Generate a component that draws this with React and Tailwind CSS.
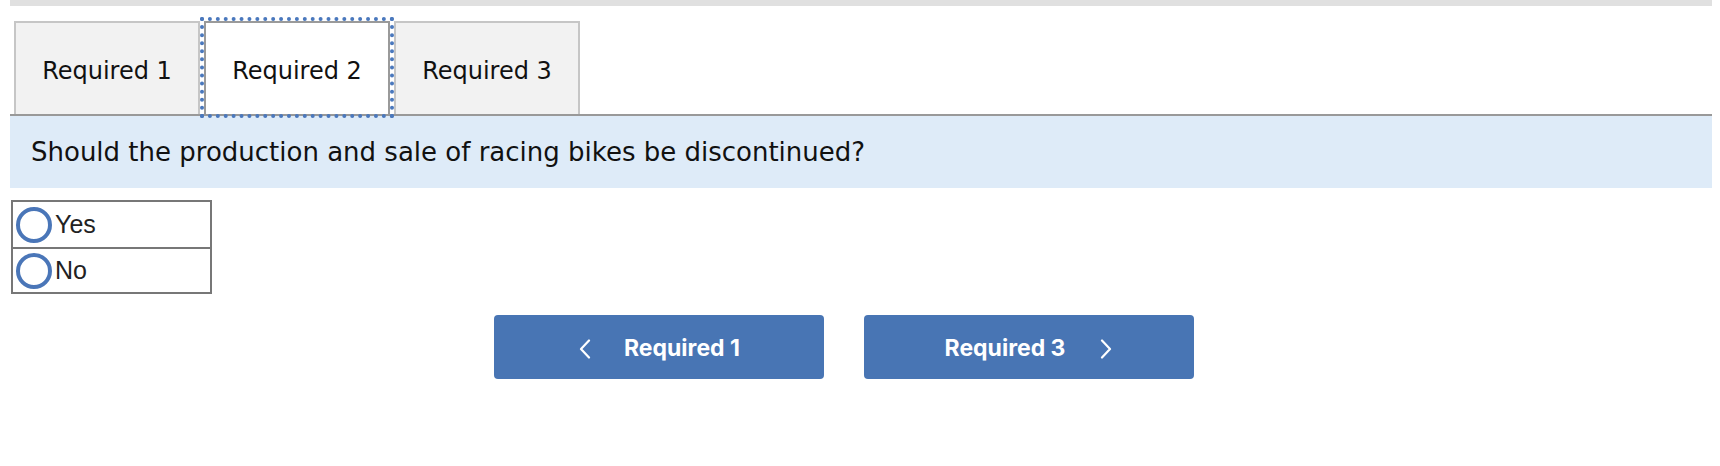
import React, { useState } from "react";

const TABS = ["Required 1", "Required 2", "Required 3"];
const OPTIONS = ["Yes", "No"];

function Chevron({ dir }) {
  return (
    <svg width="14" height="20" viewBox="0 0 14 20" fill="none" className="shrink-0">
      <polyline
        points={dir === "left" ? "11,1.5 3,10 11,18.5" : "3,1.5 11,10 3,18.5"}
        stroke="white"
        strokeWidth="2.2"
        strokeLinecap="round"
        strokeLinejoin="round"
      />
    </svg>
  );
}

export default function App() {
  const [tab, setTab] = useState(1);
  const [answer, setAnswer] = useState(null);

  return (
    <div className="w-[1720px] h-[466px] bg-white">
      <div className="ml-[10px] w-[1702px]">
        <div className="h-[6px] bg-[#e0e0e0]" />

        {/* tabs */}
        <div className="mt-[15px] flex gap-[4px] pl-[4px] border-b-2 border-[#999999] font-['DejaVu_Sans',sans-serif] text-[24px] text-[#111]">
          {TABS.map((t, i) => (
            <button
              key={t}
              onClick={() => setTab(i)}
              className={`w-[186px] h-[93px] flex items-center justify-center pt-[5px] border-2 border-b-0 ${
                i === tab
                  ? "bg-white border-[#9a9a9a] outline-4 outline-dotted outline-[#4a78bd] outline-offset-0"
                  : "bg-[#f2f2f2] border-[#c6c6c6]"
              }`}
            >
              {t}
            </button>
          ))}
        </div>

        {/* question */}
        <div className="h-[72px] bg-[#deebf8] flex items-center pl-[21px] font-['DejaVu_Sans',sans-serif] text-[26px] text-[#111]">
          Should the production and sale of racing bikes be discontinued?
        </div>

        {/* answer choices */}
        <div className="mt-[12px] ml-[1px] w-[201px] border-2 border-[#777777] font-['Liberation_Sans',Arial,sans-serif] text-[25px] text-[#222]">
          {OPTIONS.map((o, i) => (
            <label
              key={o}
              onClick={() => setAnswer(o)}
              className={`h-[45px] flex items-center pl-[3px] gap-[3px] cursor-pointer ${
                i > 0 ? "border-t-2 border-[#777777]" : ""
              }`}
            >
              <span className="w-[36px] h-[36px] rounded-full border-4 border-[#4a76b8] flex items-center justify-center">
                {answer === o && <span className="w-[16px] h-[16px] rounded-full bg-[#4a76b8]" />}
              </span>
              <span className="leading-none">{o}</span>
            </label>
          ))}
        </div>

        {/* navigation */}
        <div className="mt-[21px] ml-[484px] flex gap-[40px] font-['Inter',sans-serif] font-bold text-[23px] text-white">
          <button
            onClick={() => setTab(0)}
            className="w-[330px] h-[64px] pt-[3px] rounded-[4px] bg-[#4875b4] flex items-center justify-center gap-[32px]"
          >
            <Chevron dir="left" />
            <span>Required 1</span>
          </button>
          <button
            onClick={() => setTab(2)}
            className="w-[330px] h-[64px] pt-[3px] rounded-[4px] bg-[#4875b4] flex items-center justify-center gap-[34px]"
          >
            <span>Required 3</span>
            <Chevron dir="right" />
          </button>
        </div>
      </div>
    </div>
  );
}
